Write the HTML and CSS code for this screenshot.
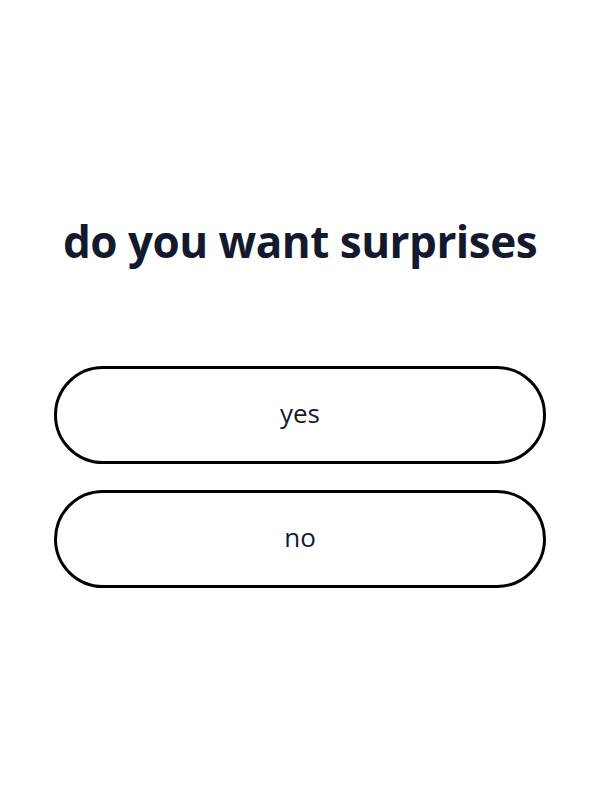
FILE: index.html
```html
<!DOCTYPE html>
<html>
<head>
<meta charset="utf-8">
<link rel="stylesheet" href="styles.css">
</head>
<body>
<main class="page">
  <h1 class="title">do you want surprises</h1>
  <div class="options">
    <button class="option">yes</button>
    <button class="option">no</button>
  </div>
</main>
</body>
</html>
```

FILE: styles.css
```css
html, body {
  margin: 0;
  padding: 0;
  background: #ffffff;
}
body {
  font-family: "Open Sans", "Liberation Sans", sans-serif;
  color: #141a2e;
}
.page {
  width: 600px;
  height: 800px;
  box-sizing: border-box;
  padding: 206px 54px 0;
  display: flex;
  flex-direction: column;
  align-items: stretch;
}
.title {
  margin: 0;
  text-align: center;
  font-size: 44px;
  font-weight: 700;
  line-height: 70px;
  letter-spacing: -0.5px;
  color: #141a2e;
}
.options {
  margin-top: 90px;
  display: flex;
  flex-direction: column;
  gap: 26px;
}
.option {
  height: 98px;
  border: 3px solid #000;
  border-radius: 49px;
  background: #fff;
  font-family: "Open Sans", "Liberation Sans", sans-serif;
  font-size: 26px;
  font-weight: 500;
  line-height: 1;
  color: #141a2e;
  padding: 0 0 4px;
}
```
